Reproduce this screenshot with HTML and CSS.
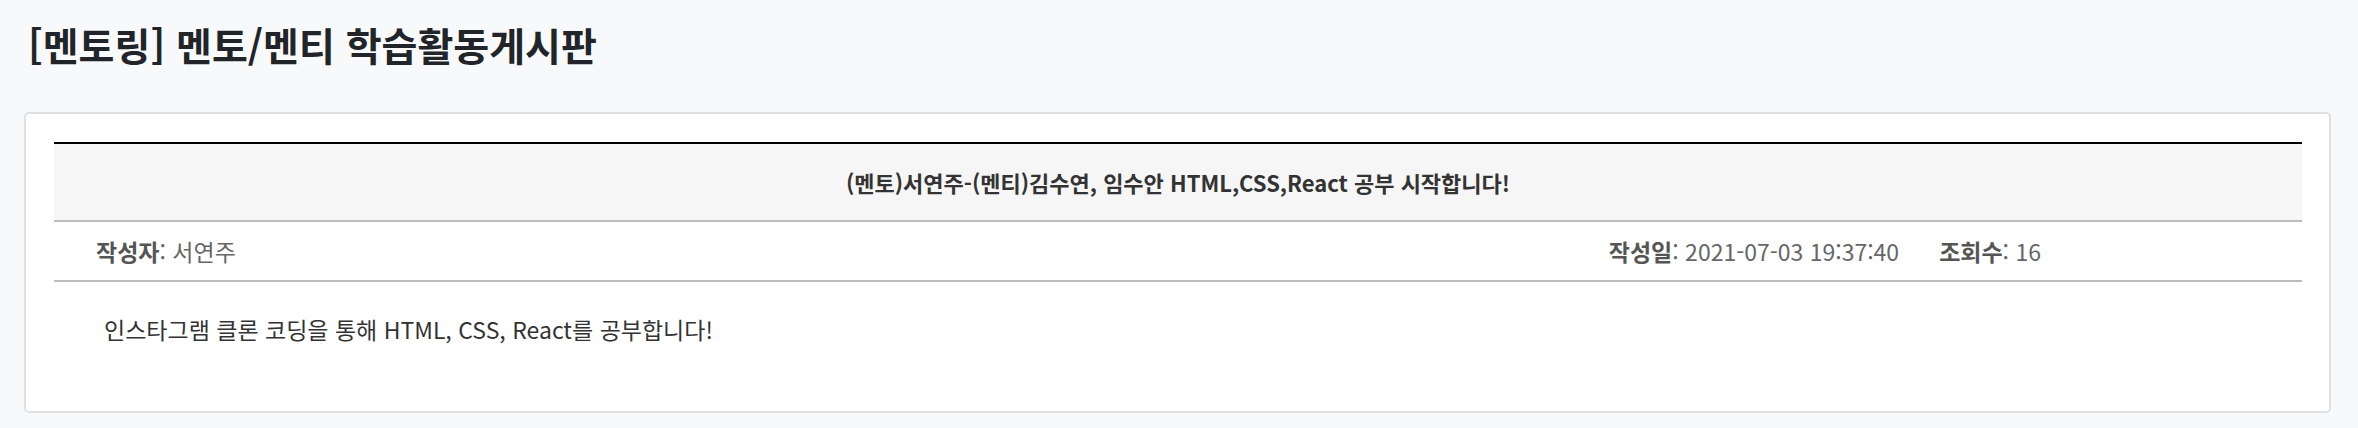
FILE: index.html
```html
<!DOCTYPE html>
<html lang="ko">
<head>
<meta charset="utf-8">
<title>[멘토링] 멘토/멘티 학습활동게시판</title>
<link rel="stylesheet" href="styles.css">
</head>
<body>
  <h1 class="page-title">[멘토링] 멘토/멘티 학습활동게시판</h1>
  <div class="card">
    <div class="post">
      <div class="post-head">(멘토)서연주-(멘티)김수연, 임수안 HTML,CSS,React 공부 시작합니다!</div>
      <div class="post-meta">
        <div class="meta-item"><span class="meta-label">작성자</span>: 서연주</div>
        <div class="meta-right">
          <div class="meta-item"><span class="meta-label">작성일</span>: 2021-07-03 19:37:40</div>
          <div class="meta-item"><span class="meta-label">조회수</span>: 16</div>
        </div>
      </div>
      <div class="post-body">인스타그램 클론 코딩을 통해 HTML, CSS, React를 공부합니다!</div>
    </div>
  </div>
</body>
</html>
```

FILE: styles.css
```css
html, body {
  margin: 0;
  padding: 0;
}
body {
  background: #f8f9fa;
  font-family: "Noto Sans CJK KR", "Noto Sans", sans-serif;
  color: #212529;
  padding-top: 17px;
}
.page-title {
  margin: 0 0 0 28px;
  font-size: 39px;
  line-height: 54px;
  font-weight: 700;
  color: #212529;
}
.card {
  margin: 41px 27px 0 24px;
  background: #ffffff;
  border: 2px solid #dfe1e3;
  border-radius: 5px;
  padding: 28px 27px 28px 28px;
}
.post-head {
  border-top: 2px solid #000;
  border-bottom: 2px solid #bbbbbb;
  background: #f6f6f6;
  height: 76px;
  display: flex;
  align-items: center;
  justify-content: center;
  font-size: 22px;
  font-weight: 700;
  color: #333;
}
.post-meta {
  height: 58px;
  border-bottom: 2px solid #bbbbbb;
  display: flex;
  align-items: center;
  justify-content: space-between;
  padding: 0 261px 0 42px;
  font-size: 23px;
  color: #666;
}
.meta-right {
  display: flex;
  gap: 40px;
}
.meta-label {
  font-weight: 700;
  color: #555;
}
.meta-date {
  letter-spacing: 0.3px;
}
.post-body {
  padding: 32px 50px 39px;
  font-size: 23px;
  line-height: 30px;
  color: #333;
}
```
